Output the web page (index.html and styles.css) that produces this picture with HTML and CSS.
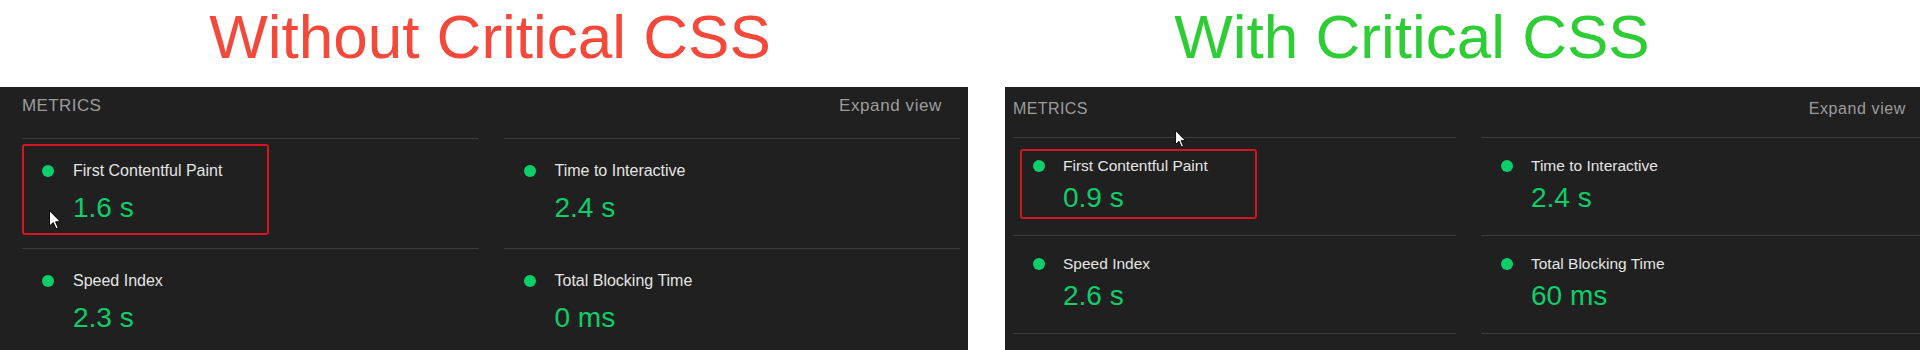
FILE: index.html
```html
<!DOCTYPE html>
<html lang="en">
<head>
    <meta charset="UTF-8">
    <meta name="viewport" content="width=device-width, initial-scale=1.0">
    <title>Critical CSS comparison</title>
    <link rel="stylesheet" href="styles.css">
</head>
<body>
    <div class="compare">
        <!-- Sebelum -->
        <section class="side side-before">
            <h1 class="title title-bad">Without Critical CSS</h1>
            <div class="panel panel-lg">
                <div class="panel-head">
                    <span class="panel-label">METRICS</span>
                    <span class="panel-link">Expand view</span>
                </div>
                <div class="metrics">
                    <div class="metric">
                        <div class="metric-name"><span class="dot"></span>First Contentful Paint</div>
                        <div class="metric-value">1.6 s</div>
                        <span class="highlight"></span>
                    </div>
                    <div class="metric">
                        <div class="metric-name"><span class="dot"></span>Time to Interactive</div>
                        <div class="metric-value">2.4 s</div>
                    </div>
                    <div class="metric">
                        <div class="metric-name"><span class="dot"></span>Speed Index</div>
                        <div class="metric-value">2.3 s</div>
                    </div>
                    <div class="metric">
                        <div class="metric-name"><span class="dot"></span>Total Blocking Time</div>
                        <div class="metric-value">0 ms</div>
                    </div>
                </div>
                <svg class="cursor" viewBox="0 0 12 20">
                    <path d="M0.5 0.5 L0.5 16 L4.3 12.6 L7 18.8 L9.2 17.8 L6.6 11.8 L11.4 11.8 Z"/>
                </svg>
            </div>
        </section>

        <!-- Sesudah -->
        <section class="side side-after">
            <h1 class="title title-good">With Critical CSS</h1>
            <div class="panel panel-sm">
                <div class="panel-head">
                    <span class="panel-label">METRICS</span>
                    <span class="panel-link">Expand view</span>
                </div>
                <div class="metrics">
                    <div class="metric">
                        <div class="metric-name"><span class="dot"></span>First Contentful Paint</div>
                        <div class="metric-value">0.9 s</div>
                        <span class="highlight"></span>
                    </div>
                    <div class="metric">
                        <div class="metric-name"><span class="dot"></span>Time to Interactive</div>
                        <div class="metric-value">2.4 s</div>
                    </div>
                    <div class="metric">
                        <div class="metric-name"><span class="dot"></span>Speed Index</div>
                        <div class="metric-value">2.6 s</div>
                    </div>
                    <div class="metric">
                        <div class="metric-name"><span class="dot"></span>Total Blocking Time</div>
                        <div class="metric-value">60 ms</div>
                    </div>
                </div>
                <svg class="cursor" viewBox="0 0 12 20">
                    <path d="M0.5 0.5 L0.5 16 L4.3 12.6 L7 18.8 L9.2 17.8 L6.6 11.8 L11.4 11.8 Z"/>
                </svg>
            </div>
        </section>
    </div>
</body>
</html>
```

FILE: styles.css
```css
/* Reset */
* {
    margin: 0;
    padding: 0;
    box-sizing: border-box;
}

body {
    font-family: 'Liberation Sans', Arial, sans-serif;
    background: #fff;
    overflow: hidden;
}

.compare {
    display: flex;
    gap: 37px;
    height: 350px;
}

.side {
    display: flex;
    flex-direction: column;
}

.side-before {
    width: 968px;
    flex-shrink: 0;
}

.side-after {
    flex: 1;
    min-width: 0;
    overflow: hidden;
}

/* Judul */
.title {
    flex-shrink: 0;
    height: 87px;
    padding-top: 1px;
    font-size: 62px;
    line-height: 71px;
    font-weight: normal;
    text-align: center;
    white-space: nowrap;
}

.title-bad {
    color: #f4483a;
    padding-left: 12px;
}

.title-good {
    color: #2fcd35;
    padding-right: 101px;
}

/* Panel metrik */
.panel {
    position: relative;
    flex: 1;
    min-height: 0;
    overflow: hidden;
    background: #202020;
}

.panel-lg {
    padding: 9px 8px 0 22px;
}

.panel-sm {
    width: 927px;
    padding: 12px 8px 0 8px;
}

.panel-head {
    display: flex;
    justify-content: space-between;
    padding-right: 18px;
    color: #9c9c9c;
}

.panel-lg .panel-head {
    font-size: 17px;
    line-height: 20px;
    margin-bottom: 22px;
}

.panel-sm .panel-head {
    font-size: 16px;
    line-height: 19px;
    margin-bottom: 19px;
}

.panel-label {
    letter-spacing: 0.4px;
}

.panel-link {
    letter-spacing: 0.6px;
}

.metrics {
    display: grid;
    grid-template-columns: 1fr 1fr;
    column-gap: 25px;
}

.metric {
    position: relative;
    border-top: 1px solid #3b3b3b;
    padding-left: 20px;
}

/* garis bawah baris terakhir */
.metric:nth-child(n+3) {
    border-bottom: 1px solid #3b3b3b;
}

.panel-lg .metric {
    padding-top: 22px;
    padding-bottom: 23px;
}

.panel-sm .metric {
    padding-top: 19px;
    padding-bottom: 20px;
}

.metric-name {
    display: flex;
    align-items: center;
    gap: 19px;
    color: #e4e4e4;
}

.panel-lg .metric-name {
    font-size: 16px;
    line-height: 20px;
}

.panel-sm .metric-name {
    font-size: 15.5px;
    line-height: 18px;
    gap: 18px;
}

.dot {
    width: 12px;
    height: 12px;
    border-radius: 50%;
    background: #0cce6b;
    flex-shrink: 0;
}

.metric-value {
    color: #0cce6b;
    font-size: 28px;
    line-height: 34px;
    padding-left: 31px;
}

.panel-lg .metric-value {
    margin-top: 10px;
}

.panel-sm .metric-value {
    margin-top: 6px;
    padding-left: 30px;
}

/* Kotak merah penanda */
.highlight {
    position: absolute;
    border: 2px solid #d3161f;
    border-radius: 3px;
}

.panel-lg .highlight {
    left: 0;
    top: 5px;
    width: 247px;
    height: 91px;
}

.panel-sm .highlight {
    left: 7px;
    top: 11px;
    width: 237px;
    height: 70px;
}

/* Kursor mouse */
.cursor {
    position: absolute;
    fill: #fff;
    stroke: #000;
    stroke-width: 1;
    stroke-linejoin: round;
}

.panel-lg .cursor {
    left: 49px;
    top: 123px;
    width: 12px;
    height: 20px;
}

.panel-sm .cursor {
    left: 170px;
    top: 43px;
    width: 11px;
    height: 18px;
}
```
